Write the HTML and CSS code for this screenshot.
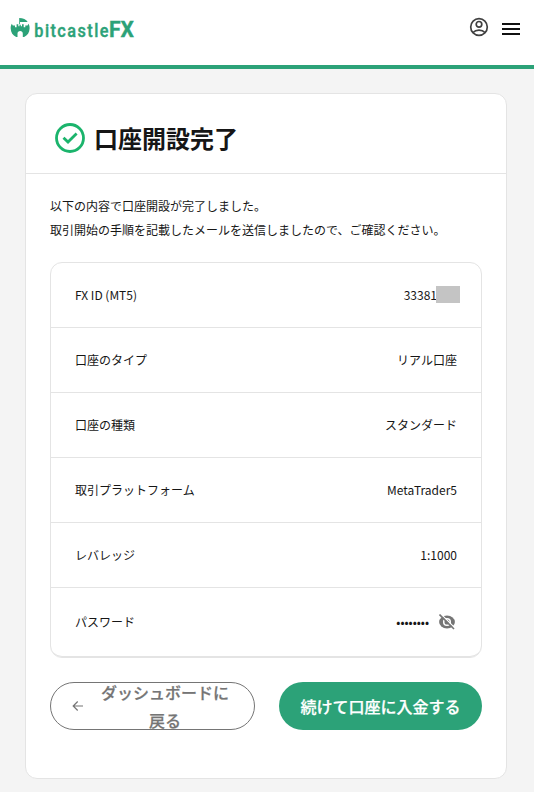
FILE: index.html
```html
<!DOCTYPE html>
<html lang="ja">
<head>
<meta charset="utf-8">
<title>口座開設完了</title>
<link rel="stylesheet" href="styles.css">
</head>
<body>
<header class="topbar">
  <svg class="logo" width="126" height="26" viewBox="0 0 126 26" role="img" aria-label="bitcastleFX">
    <path d="M9.200 3C13 3 16.200 4.500 17.700 7H10V9.200H9.200z"/>
    <path d="M1.800 8.800L2.800 10.500H5V12.200H6.600V9.300H8.300V11.200H9.500V9.800H10.800V11.200H12V9.300H13.700V12.200H15.300V10.500H17.500L18.500 8.800C19.400 10.300 19.700 12 19.600 13.500C19.500 17.500 17.500 20.500 14.100 22H12.800V18.800C12.800 16.900 11.700 16 10.150 16C8.600 16 7.500 16.900 7.500 18.800V22H6.200C2.800 20.500.800 17.500.700 13.500C.600 12 .900 10.300 1.800 8.800z"/>
    <g class="logo-light" transform="translate(24.300 21.500) scale(.88 1)"><text textLength="84.300">bitcastle</text></g>
    <text class="logo-bold" x="99" y="21.500" textLength="25" lengthAdjust="spacingAndGlyphs">FX</text>
  </svg>
  <nav class="actions">
    <svg width="20" height="20" viewBox="0 0 20 20" fill="none" stroke="#404040" stroke-width="1.700">
      <circle cx="10" cy="10" r="8.300"/><circle cx="10" cy="7.300" r="2.800"/><path d="M4 15.500c3-3.300 9-3.300 12 0"/>
    </svg>
    <div class="burger"><i></i><i></i><i></i></div>
  </nav>
</header>
<main class="card">
  <div class="card-head">
    <svg width="30" height="30" viewBox="0 0 30 30" fill="none" stroke="#1bb46c" stroke-width="2.800">
      <circle cx="15" cy="15" r="13.500"/><path d="M8.500 14.700l4.500 4.400 8.600-8.500"/>
    </svg>
    <h1>口座開設完了</h1>
  </div>
  <div class="card-body">
    <p>以下の内容で口座開設が完了しました。<br>取引開始の手順を記載したメールを送信しましたので、ご確認ください。</p>
    <dl class="details">
      <div class="row"><dt>FX ID (MT5)</dt><dd class="account">33381<span class="mask"></span></dd></div>
      <div class="row"><dt>口座のタイプ</dt><dd>リアル口座</dd></div>
      <div class="row"><dt>口座の種類</dt><dd>スタンダード</dd></div>
      <div class="row"><dt>取引プラットフォーム</dt><dd>MetaTrader5</dd></div>
      <div class="row"><dt>レバレッジ</dt><dd>1:1000</dd></div>
      <div class="row password"><dt>パスワード</dt><dd><span class="dots">••••••••</span>
        <svg width="16" height="16" viewBox="0 0 16 16"><ellipse cx="8" cy="8" rx="7.900" ry="6.500" fill="#757575"/><circle cx="8" cy="8" r="3.300" fill="none" stroke="#fff" stroke-width="1.500"/><path d="M1.900.1l14 14" stroke="#fff" stroke-width="1.300"/><path d="M.5.500l14.500 14.500" stroke="#757575" stroke-width="1.600"/></svg></dd></div>
    </dl>
    <div class="buttons">
      <button class="btn back" type="button">
        <svg width="12" height="12" viewBox="0 0 12 12" fill="none" stroke="#757575" stroke-width="1.200"><path d="M11 6H1.500M5.700 1.500L1.200 6l4.500 4.500"/></svg>
        <span>ダッシュボードに<br>戻る</span>
      </button>
      <button class="btn deposit" type="button">続けて口座に入金する</button>
    </div>
  </div>
</main>
</body>
</html>
```

FILE: styles.css
```css
* { box-sizing: border-box; }
body {
  margin: 0;
  height: 792px;
  background: #f4f4f4;
  color: #161616;
  font: 12px/24px "Noto Sans CJK JP", sans-serif;
}
.topbar {
  display: flex;
  justify-content: space-between;
  height: 69px;
  padding: 15px 14px 0 10px;
  background: #fff;
  border-bottom: 4px solid #2ca278;
}
.logo { fill: #2ca278; }
.logo-light { font: 500 18.500px Roboto, sans-serif; stroke: #2ca278; stroke-width: .4px; }
.logo-bold { font: 700 21.500px Roboto, sans-serif; stroke: #2ca278; stroke-width: .3px; }
.actions { display: flex; gap: 13px; padding-top: 2px; }
.burger { display: flex; flex-direction: column; gap: 3px; padding-top: 6px; }
.burger i { width: 18px; height: 2px; background: #111; }
.card {
  width: 482px;
  height: 686px;
  margin: 24px 0 0 25px;
  background: #fff;
  border: 1px solid #e4e4e4;
  border-radius: 12px;
}
.card-head {
  display: flex;
  align-items: center;
  gap: 9px;
  height: 80px;
  padding: 8px 29px 0;
  border-bottom: 1px solid #e4e4e4;
}
h1 { margin: 0; font-size: 24px; line-height: 36px; font-weight: 700; }
.card-body { padding: 20px 24px 0; }
p { margin: 0 0 20px; white-space: nowrap; }
.details {
  margin: 0 0 24px;
  border: 1px solid #e4e4e4;
  border-radius: 12px;
}
.row {
  display: flex;
  align-items: center;
  justify-content: space-between;
  height: 65px;
  padding: 0 24px;
  border-bottom: 1px solid #e4e4e4;
}
.row.password { height: 69px; border-radius: 0 0 11px 11px; }
dd { display: flex; align-items: center; margin: 0; }
.account { margin-right: -3px; }
.mask { width: 24px; height: 17px; margin: 0 0 2px -1px; background: #c4c4c4; }
.dots { margin-right: 10px; }
.password svg { margin-right: 2px; }
.buttons { display: flex; gap: 24px; }
.btn {
  display: flex;
  align-items: center;
  justify-content: center;
  height: 48px;
  padding: 0;
  border: 0;
  border-radius: 24px;
  font: 500 16px/28px "Noto Sans CJK JP", sans-serif;
  -webkit-text-stroke: .25px currentColor;
}
.back {
  width: 205px;
  gap: 17px;
  padding-right: 4px;
  background: #fff;
  border: 1px solid #757575;
  color: #757575;
}
.deposit { width: 203px; background: #2ca278; color: #fff; }
```
